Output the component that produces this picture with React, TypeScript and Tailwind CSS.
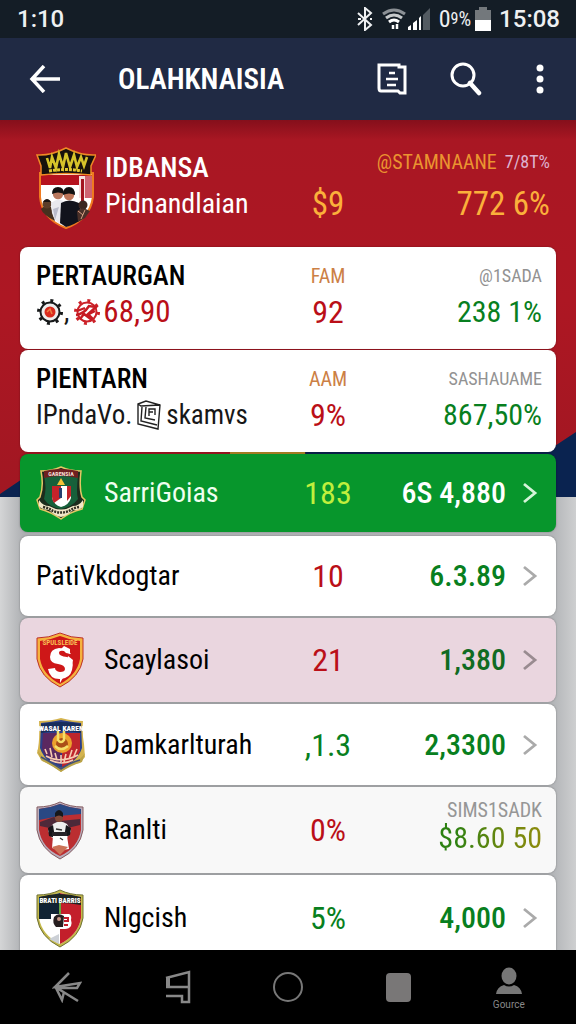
import type { ReactNode } from "react";

function HeroBadge() {
  return (
    <svg viewBox="0 0 60 82" className="h-[82px] w-[60px]" aria-hidden="true">
      <path d="M4 26 V50 Q6 72 30 81 Q54 72 57 50 V26Z" fill="#fff" stroke="#ef7a1f" strokeWidth="2" />
      <path d="M5 28h51v10H5z" fill="#b5121e" />
      <path d="M43 29h6v22h-6z" fill="#f5dede" />
      <path d="M49 29h7v22h-7z" fill="#cf6472" />
      <path d="M45 32h3v24h-3z" fill="#a3141f" />
      <path d="M1 8 Q14 9 30 1 Q46 9 60 8 L55 19 V28 Q30 25 5 28 V19Z" fill="#17110c" stroke="#f08a24" strokeWidth="1.5" />
      <path d="M11 11l3 10 2-11 4 11 3-14 4 13 3-14 4 14 4-12 3 12 4-10 3 9 3-9" fill="none" stroke="#d6c32a" strokeWidth="2.6" />
      <path d="M13 24q17-3 33 0" fill="none" stroke="#dfc832" strokeWidth="3" strokeDasharray="3 1" />
      <path d="M5 62q5-6 10-2l4 14Q7 68 5 62Z" fill="#45301f" />
      <circle cx="11" cy="57" r="4.5" fill="#5b3d28" />
      <path d="M7 55q4-6 8 0z" fill="#1a1412" />
      <path d="M15 56q8-7 15 0l-4 22q-8-4-10-12Z" fill="#e9e9ee" />
      <path d="M17 62l6-2-4 13Z" fill="#babccb" />
      <circle cx="22" cy="47" r="5.2" fill="#b9785e" />
      <path d="M16 47q0-7 6-7t6 7q-6-3-12 0Z" fill="#111" />
      <path d="M25 56q8-5 18 0l3 16q-8 6-16 8l-6-4Z" fill="#11131c" />
      <circle cx="33" cy="48" r="5.2" fill="#bd765a" />
      <path d="M27 48q0-8 6-8t6 8q-6-3-12 0Z" fill="#111" />
      <circle cx="47" cy="58" r="4.5" fill="#3a2620" />
      <path d="M41 64q5-5 13 0l-5 7-7 4Z" fill="#4a3028" />
      <path d="M42 64l5 4m2-5-4 9" stroke="#d9a085" strokeWidth="1" />
    </svg>
  );
}

function GreenBadge() {
  return (
    <svg viewBox="0 0 50 54" className="h-[54px] w-[50px]" aria-hidden="true">
      <path d="M5 5 Q16 5 25 1 Q34 5 45 5 Q43 22 46 31 L49 34 L46 43 Q34 46 25 53 Q15 46 4 43 L1 34 L4 31 Q8 20 5 5Z" fill="#1c2c1d" stroke="#e4c765" strokeWidth="1.5" />
      <path d="M8 10 H42 Q40 26 42 33 Q36 41 25 43 Q13 41 8 33 Q11 22 8 10Z" fill="#17603a" />
      <path d="M8 5 Q25 1 42 5 V12 Q25 8 8 12Z" fill="#6f2020" />
      <text x="25" y="10" textAnchor="middle" fontSize="6" fontWeight="700" fill="#f4dfd6">GARENSIA</text>
      <path d="M16 20h19v12q-2 7-10 9-7-2-9-9z" fill="#fff" />
      <path d="M16 20h9v12l-7 5q-2-3-2-6z" fill="#c5232a" />
      <path d="M31 20h4v10l-4 5z" fill="#c5232a" />
      <path d="M23 22h3v10h-3z" fill="#263f6f" />
      <path d="M25 12l4 7h-8z" fill="#f6c236" />
      <path d="M3 34q4 6 10 6 12 7 24 0 6 0 10-6v7q-5 4-10 3-6 6-12 7-6-1-12-7-7 0-10-4z" fill="#f2e7c8" />
      <path d="M7 41q6 1 10 4 8 3 16 0 4-3 10-4" fill="none" stroke="#333024" strokeWidth="2.5" strokeDasharray="2 1" />
    </svg>
  );
}

function RedBadge() {
  return (
    <svg viewBox="0 0 48 56" className="h-14 w-12" aria-hidden="true">
      <path d="M1 6 Q13 6 24 1 Q35 6 47 6 V27 Q44 45 24 55 Q4 45 1 27Z" fill="#f5b33e" stroke="#bd2f27" strokeWidth="1" />
      <path d="M4 9 Q14 8 24 4 Q34 8 44 9 V27 Q41 43 24 52 Q7 43 4 27Z" fill="#ce1718" />
      <text x="24" y="13" textAnchor="middle" fontSize="7" fontWeight="700" fill="#f7bd55">SPULSLEIDE</text>
      <path d="M35 22q-3-6-12-6-9 1-9 9 0 6 8 7 7 1 7 5 0 3-5 3-5-1-5-4l-7 1q2 11 13 10 9-1 11-9 3-11-5-13-8-1-8-4 0-3 5-2l2 2z" fill="#fff" />
      <path d="M24 43l4 1-4 7zM25 17l3-3 6 3v5z" fill="#fff" />
      <path d="M32 24l5 4-2 10-5-3z" fill="#fff" />
    </svg>
  );
}

function BlueBadge() {
  return (
    <svg viewBox="0 0 50 56" className="h-14 w-[50px]" aria-hidden="true">
      <path d="M3 4 Q16 4 25 1 Q35 4 47 4 Q46 16 48 27 L49 40 L44 46 Q32 48 25 55 Q16 48 6 44 L1 36 Q4 25 3 4Z" fill="#d4b34d" />
      <path d="M5 6 Q16 5 25 3 Q35 5 45 6 L46 31 Q42 44 25 52 Q8 44 4 31Z" fill="#2b3f8a" />
      <path d="M26 16h18v18q-4 10-18 16z" fill="#be252c" />
      <path d="M7 16h18v32Q8 42 6 31z" fill="#5b2860" />
      <path d="M5 7 Q25 3 45 7 V16 Q25 12 5 16Z" fill="#172d5a" />
      <text x="25" y="13.5" textAnchor="middle" fontSize="7.5" fontWeight="900" fill="#fff">WASAL KAREN</text>
      <circle cx="26" cy="26" r="10" fill="#eca12d" />
      <circle cx="26" cy="27" r="6" fill="#aa4e18" />
      <path d="M22 14v9q3 4 6 0v-9M19 29q6 6 13 0" fill="none" stroke="#f4df68" strokeWidth="2.5" />
      <path d="M9 32l2 5m3-6 2 9m3-4 2 7m4-5v7m5-8-2 8m8-12-3 9m8-10-3 7M10 39q15 8 32-1M14 43q12 6 23 0" fill="none" stroke="#f7cbb1" strokeWidth="1.6" />
      <path d="M1 32q4 10 24 19 20-7 24-15l-3 9q-10 3-21 10-10-7-20-12z" fill="#b9a348" />
      <path d="M5 40q10 5 20 12 8-6 19-9" fill="none" stroke="#405078" strokeWidth="1.5" />
    </svg>
  );
}

function PlayerBadge() {
  return (
    <svg viewBox="0 0 48 59" className="h-[59px] w-12" aria-hidden="true">
      <path d="M1 6 Q14 6 24 1 Q34 6 47 6 V29 Q44 48 24 58 Q4 48 1 29Z" fill="#b9aebc" stroke="#865c61" strokeWidth="1" />
      <path d="M3 8 Q14 7 24 3 Q34 7 45 8 V29 Q42 47 24 55 Q6 47 3 29Z" fill="#bb2e31" />
      <path d="M3 8 Q14 7 24 3 Q34 7 45 8 V13l-22 2-20 4z" fill="#294883" />
      <path d="M4 21l14-5 6 4 20-2v6l-21 5-19-4z" fill="#4d2939" />
      <path d="M17 23q7-5 14 0l4 7-4 7H16l-4-7z" fill="#eee" />
      <path d="M12 27l5-3 2 13-6-2zm23 0-5-3-2 13 6-3z" fill="#17161b" />
      <path d="M16 31h15v4H16z" fill="#272328" />
      <circle cx="23" cy="17" r="4" fill="#844a38" />
      <path d="M19 16v-4q4-6 8 0v4q-4-3-8 0z" fill="#17171a" />
      <path d="M17 35h14l2 13q-9 2-17-1z" fill="#fff" />
      <path d="M16 46l7-2 9 2-8 8z" fill="#cc7357" />
      <path d="M20 28l6 1m-2 8 3 2" stroke="#333" strokeWidth="1.3" />
    </svg>
  );
}

function QuarterBadge() {
  return (
    <svg viewBox="0 0 48 59" className="h-[59px] w-12" aria-hidden="true">
      <path d="M1 6 Q14 6 24 1 Q34 6 47 6 V29 Q44 48 24 58 Q4 48 1 29Z" fill="#c4b94a" stroke="#6f7137" strokeWidth="1" />
      <path d="M3 8 Q14 7 24 4 Q34 7 45 8 V29 Q42 46 24 55 Q6 46 3 29Z" fill="#fff" />
      <path d="M3 8 Q14 7 24 4V30H3z" fill="#112434" />
      <path d="M24 4 Q34 7 45 8v21q-3 17-21 26z" fill="#c31f2b" />
      <path d="M3 8 Q24 2 45 8v8Q24 12 3 16z" fill="#1c2422" />
      <text x="24" y="13.5" textAnchor="middle" fontSize="7" fontWeight="900" fill="#fff">BRATI BARRIS</text>
      <path d="M23 14h2v11h-2z" fill="#68a641" />
      <path d="M15 25h18q3 1 2 6 1 2 0 6-2 3-6 3h-6v-5h-8z" fill="#fff" />
      <path d="M18 28q4-5 10-1l-1 11h-7q-4-4-2-10" fill="#271f20" />
      <path d="M28 29h4v3h-4m0 4h4" fill="none" stroke="#c31f2b" strokeWidth="2" />
      <circle cx="23" cy="30" r="2" fill="#c89989" />
      <path d="M13 50l10-5v10z" fill="#ccd0d6" />
    </svg>
  );
}

function Gear({ red = false }: { red?: boolean }) {
  return (
    <svg viewBox="0 0 28 28" className="size-7 shrink-0" aria-hidden="true">
      <circle cx="14" cy="14" r="11.5" fill="none" stroke={red ? "#cc2229" : "#17191a"} strokeWidth="3" strokeDasharray="3 6.03" />
      <circle cx="14" cy="14" r="9.5" fill={red ? "#fff" : "#eee"} stroke={red ? "#cc2229" : "#17191a"} strokeWidth="2" />
      {red ? (
        <path d="M3 17q8-1 13-9l7 1-8 7 5 5M7 21l4-5 8 6M4 13l8-3M22 13l-6 3" fill="none" stroke="#c61b23" strokeWidth="2.4" />
      ) : (
        <>
          <circle cx="14" cy="14" r="5.5" fill="#d92b1e" />
          <path d="M11 14l3-3 2 5" fill="none" stroke="#ee8144" strokeWidth="1.5" />
        </>
      )}
    </svg>
  );
}

function Cube() {
  return (
    <svg viewBox="0 0 26 30" className="h-[30px] w-[26px] shrink-0" fill="none" stroke="#222" strokeWidth="1.4" aria-hidden="true">
      <path d="M2 4L10 1l14 4-2 24-20-5zM2 4l3 2 19-1M6 7L5 21l16 4M10 7L9 18l10 2M13 16V9h6v6M13 12h4" />
    </svg>
  );
}

function Chevron({ className }: { className: string }) {
  return (
    <svg viewBox="0 0 16 22" className={`mr-1 h-[22px] w-4 shrink-0 ${className}`} fill="none" stroke="currentColor" strokeWidth="2.8" aria-hidden="true">
      <path d="M2 2l11 9L2 20" />
    </svg>
  );
}

const grid = "grid grid-cols-[1fr_80px_174px] items-center rounded-lg pl-4 pr-3.5 shadow-[0_0_2px_rgba(0,0,0,0.35)]";

function Summary({ title, label, value, side, amount, children }: { title: string; label: string; value: string; side: string; amount: string; children: ReactNode }) {
  return (
    <section className={`${grid} h-[102px] bg-white pb-2`}>
      <div>
        <h3 className="text-[27px] leading-9 font-medium text-black">{title}</h3>
        <div className="flex h-9 items-center text-[27px] leading-9 whitespace-nowrap text-neutral-900">{children}</div>
      </div>
      <div className="text-center">
        <p className="text-xl leading-9 text-[#cc8045]">{label}</p>
        <p className="text-[32px] leading-9 text-[#ba0f18]">{value}</p>
      </div>
      <div className="text-right">
        <p className="text-lg leading-9 text-[#929292]">{side}</p>
        <p className="text-[30px] leading-9 text-[#087f20]">{amount}</p>
      </div>
    </section>
  );
}

type RowProps = {
  name: string;
  count: string;
  amount: string;
  badge?: ReactNode;
  note?: string;
  box: string;
  nameColor?: string;
  countColor: string;
  amountColor?: string;
  arrow?: string;
};

function Row({ name, count, amount, badge, note, box, nameColor = "text-black", countColor, amountColor = "text-[#087f20]", arrow = "text-[#aaa]" }: RowProps) {
  return (
    <li>
      <a href="#detail" className={`${grid} ${box}`}>
        <span className="flex items-center">
          {badge && <span className="w-[68px]">{badge}</span>}
          <span className={`text-[28px] leading-9 ${nameColor}`}>{name}</span>
        </span>
        <span className={`text-center text-[32px] leading-9 ${countColor}`}>{count}</span>
        {note ? (
          <span className="flex flex-col pb-2 text-right">
            <span className="text-xl leading-6 text-[#969696]">{note}</span>
            <span className="bg-linear-to-r from-[#2c8112] from-50% to-[#8e8b0c] bg-clip-text text-[30px] leading-8 text-transparent">{amount}</span>
          </span>
        ) : (
          <span className="flex items-center justify-end gap-4 whitespace-nowrap">
            <span className={`text-[30px] leading-9 font-medium ${amountColor}`}>{amount}</span>
            <Chevron className={arrow} />
          </span>
        )}
      </a>
    </li>
  );
}

export default function App() {
  return (
    <div className="flex h-screen flex-col overflow-hidden bg-[#c9cacc] font-['Roboto_Condensed','Liberation_Sans_Narrow',Roboto,sans-serif]">
      <div className="flex h-[38px] shrink-0 items-center justify-between bg-[#141d26] pr-4 pl-[17px] font-[Roboto,sans-serif] text-2xl font-medium text-[#eef0f2]">
        <span>1:10</span>
        <div className="flex items-center">
          <svg viewBox="0 0 16 24" className="mr-2 h-6 w-4" fill="none" stroke="currentColor" strokeWidth="2" aria-hidden="true">
            <path d="M1 6l13 12-6 5V1l6 5L1 18M14 11v2M1 12h3" />
          </svg>
          <svg viewBox="0 0 26 22" className="h-[22px] w-[26px]" fill="none" strokeWidth="3" aria-hidden="true">
            <path d="M2 6q11-8 22 0" stroke="#8b9095" />
            <path d="M5 10q8-6 16 0" stroke="#c6c9cb" />
            <path d="M8 14q5-4 10 0" stroke="#fff" />
            <path d="M12 17v4M16 16v5" stroke="#fff" strokeWidth="2.5" />
          </svg>
          <svg viewBox="0 0 24 24" className="mr-2 h-6 w-6" aria-hidden="true">
            <path d="M1 23v-3l3-2v5zM6 23v-7l4-3v10zM12 23V11l2-2v14z" fill="#fff" />
            <path d="M16 23V8l7-7v22z" fill="#535b62" />
          </svg>
          <span className="flex items-center font-['Roboto_Condensed',Roboto,sans-serif] font-normal">
            0<span className="text-base">9</span><span className="text-xl">%</span>
          </span>
          <svg viewBox="0 0 16 24" className="mr-2 ml-1 h-6 w-4" aria-hidden="true">
            <path d="M4 0h8v3h4v11H0V3h4z" fill="#73787c" />
            <path d="M0 13h16v11H0z" fill="#fff" />
          </svg>
          <span>15:08</span>
        </div>
      </div>

      <header className="flex h-[82px] shrink-0 items-center bg-[#202a44] pr-5 pl-[29px] text-white">
        <button type="button" aria-label="Back">
          <svg viewBox="0 0 32 28" className="h-7 w-8" fill="none" stroke="currentColor" strokeWidth="3.5" aria-hidden="true">
            <path d="M15 1L3 14l12 13M2 14h29" />
          </svg>
        </button>
        <h1 className="ml-[57px] flex-1 text-[29px] leading-10 font-semibold">OLAHKNAISIA</h1>
        <div className="flex items-center gap-[42px]">
          <button type="button" aria-label="News">
            <svg viewBox="0 0 32 34" className="h-[34px] w-8" fill="none" stroke="currentColor" strokeWidth="3" aria-hidden="true">
              <path d="M3 3h20v2h6v26h-5l-2-2H5q-2 0-2-3z" />
              <path d="M13 11h6M10 17h12M11 23h9" strokeWidth="2.5" />
            </svg>
          </button>
          <button type="button" aria-label="Search">
            <svg viewBox="0 0 32 34" className="h-[34px] w-8" fill="none" stroke="currentColor" strokeWidth="3" aria-hidden="true">
              <circle cx="13" cy="13" r="11" />
              <path d="M20 21l9 10" strokeWidth="4.500" strokeLinecap="round" />
            </svg>
          </button>
          <button type="button" aria-label="More options" className="flex w-8 justify-center">
            <svg viewBox="0 0 8 30" className="h-[30px] w-2" fill="currentColor" aria-hidden="true">
              <circle cx="4" cy="4" r="3.5" />
              <circle cx="4" cy="15" r="3.5" />
              <circle cx="4" cy="26" r="3.5" />
            </svg>
          </button>
        </div>
      </header>

      <main className="relative min-h-0 flex-1 overflow-hidden bg-[linear-gradient(90deg,#d4d5d6,#aeb0b3_4%,#b3b5b8_96%,#cecfd0)] px-5">
        <div className="absolute inset-x-0 top-0 h-[377px] bg-[#0a2350]" />
        <div className="absolute inset-x-0 top-0 h-[377px] bg-[linear-gradient(#850f1b,#a91723_20px,#ad1723_180px,#a11722)] [clip-path:polygon(0_0,100%_0,100%_312px,95%_331px,53%_331px,53%_335px,10%_335px,0_374px)]" />
        <div className="absolute top-[331px] left-[40%] h-1 w-[13%] bg-[#b58a28]" />
        <div className="relative">
          <section className="grid h-[127px] grid-cols-[1fr_80px_188px] items-center pl-4">
            <div className="flex items-center gap-[9px] pt-2">
              <HeroBadge />
              <div className="pb-1 text-white">
                <h2 className="text-[28px] leading-9 font-medium">IDBANSA</h2>
                <p className="text-[28px] leading-9">Pidnandlaian</p>
              </div>
            </div>
            <p className="pt-10 text-center text-[33px] leading-10 text-[#fbb03b]">$9</p>
            <div className="pr-1.5 text-right whitespace-nowrap">
              <p className="flex justify-end gap-2 text-xl leading-9 text-[#eb9430]">
                @STAMNAANE <span className="text-lg leading-9 text-[#deb3d0]">7/8T%</span>
              </p>
              <p className="pt-1 text-[33px] leading-10 text-[#fbb03b]">772 6%</p>
            </div>
          </section>

          <div className="flex flex-col gap-px">
            <Summary title="PERTAURGAN" label="FAM" value="92" side="@1SADA" amount="238 1%">
              <Gear />
              <span className="mr-1">,</span>
              <Gear red />
              <span className="ml-0.5 text-[31px] text-[#ba0f18]">68,90</span>
            </Summary>
            <Summary title="PIENTARN" label="AAM" value="9%" side="SASHAUAME" amount="867,50%">
              <span className="mr-1">IPndaVo.</span>
              <Cube />
              <span className="ml-1">skamvs</span>
            </Summary>
            <ul className="flex flex-col gap-0.5 pt-px">
              <Row name="SarriGoias" count="183" amount="6S 4,880" badge={<GreenBadge />} box="mb-0.5 h-[78px] bg-[#07962c]" nameColor="text-[#effff0]" countColor="text-[#c0ef3d]" amountColor="text-white" arrow="text-[#d5f4d9]" />
              <Row name="PatiVkdogtar" count="10" amount="6.3.89" box="h-20 bg-white" countColor="text-[#ba0f18]" />
              <Row name="Scaylasoi" count="21" amount="1,380" badge={<RedBadge />} box="h-[84px] bg-[#ead6df]" countColor="text-[#ba0f18]" amountColor="text-[#106b22]" arrow="text-[#998b90]" />
              <Row name="Damkarlturah" count=",1.3" amount="2,3300" badge={<BlueBadge />} box="h-[81px] bg-white" countColor="text-[#087f20]" />
              <Row name="Ranlti" count="0%" amount="$8.60 50" note="SIMS1SADK" badge={<PlayerBadge />} box="h-[86px] bg-[#f8f8f8]" countColor="text-[#ba0f18]" />
              <Row name="Nlgcish" count="5%" amount="4,000" badge={<QuarterBadge />} box="h-[86px] bg-white" countColor="text-[#087f20]" />
            </ul>
          </div>
        </div>
      </main>

      <nav className="grid h-[74px] shrink-0 grid-cols-5 items-center bg-black px-3 text-[#888]">
        <button type="button" aria-label="Back" className="flex justify-center">
          <svg viewBox="0 0 30 32" className="h-8 w-[30px]" fill="none" stroke="currentColor" strokeWidth="2.5" aria-hidden="true">
            <path d="M17 2L3 16l25-4-3 5-20 0 21 13M4 17l6 12 2-8" />
          </svg>
        </button>
        <button type="button" aria-label="Recent" className="flex justify-center">
          <svg viewBox="0 0 28 34" className="h-[34px] w-7" fill="none" stroke="currentColor" strokeWidth="2.5" aria-hidden="true">
            <path d="M2 8L25 2v30h-7v-6H2M2 17h23" />
            <path d="M4 8v9" strokeWidth="4" />
          </svg>
        </button>
        <button type="button" aria-label="Home" className="flex justify-center">
          <span className="size-[30px] rounded-full border-2 border-[#777]" />
        </button>
        <button type="button" aria-label="Stop" className="flex justify-center">
          <span className="h-[29px] w-[25px] rounded-sm bg-[#797777]" />
        </button>
        <button type="button" className="flex flex-col items-center gap-1 pt-1 font-[Roboto,sans-serif] text-[10px] leading-3">
          <svg viewBox="0 0 28 28" className="size-7" fill="#777" aria-hidden="true">
            <ellipse cx="14" cy="9" rx="7.5" ry="8.5" />
            <path d="M1 27q1-7 8-9 5 3 10 0 7 2 8 9z" />
          </svg>
          Gource
        </button>
      </nav>
    </div>
  );
}
